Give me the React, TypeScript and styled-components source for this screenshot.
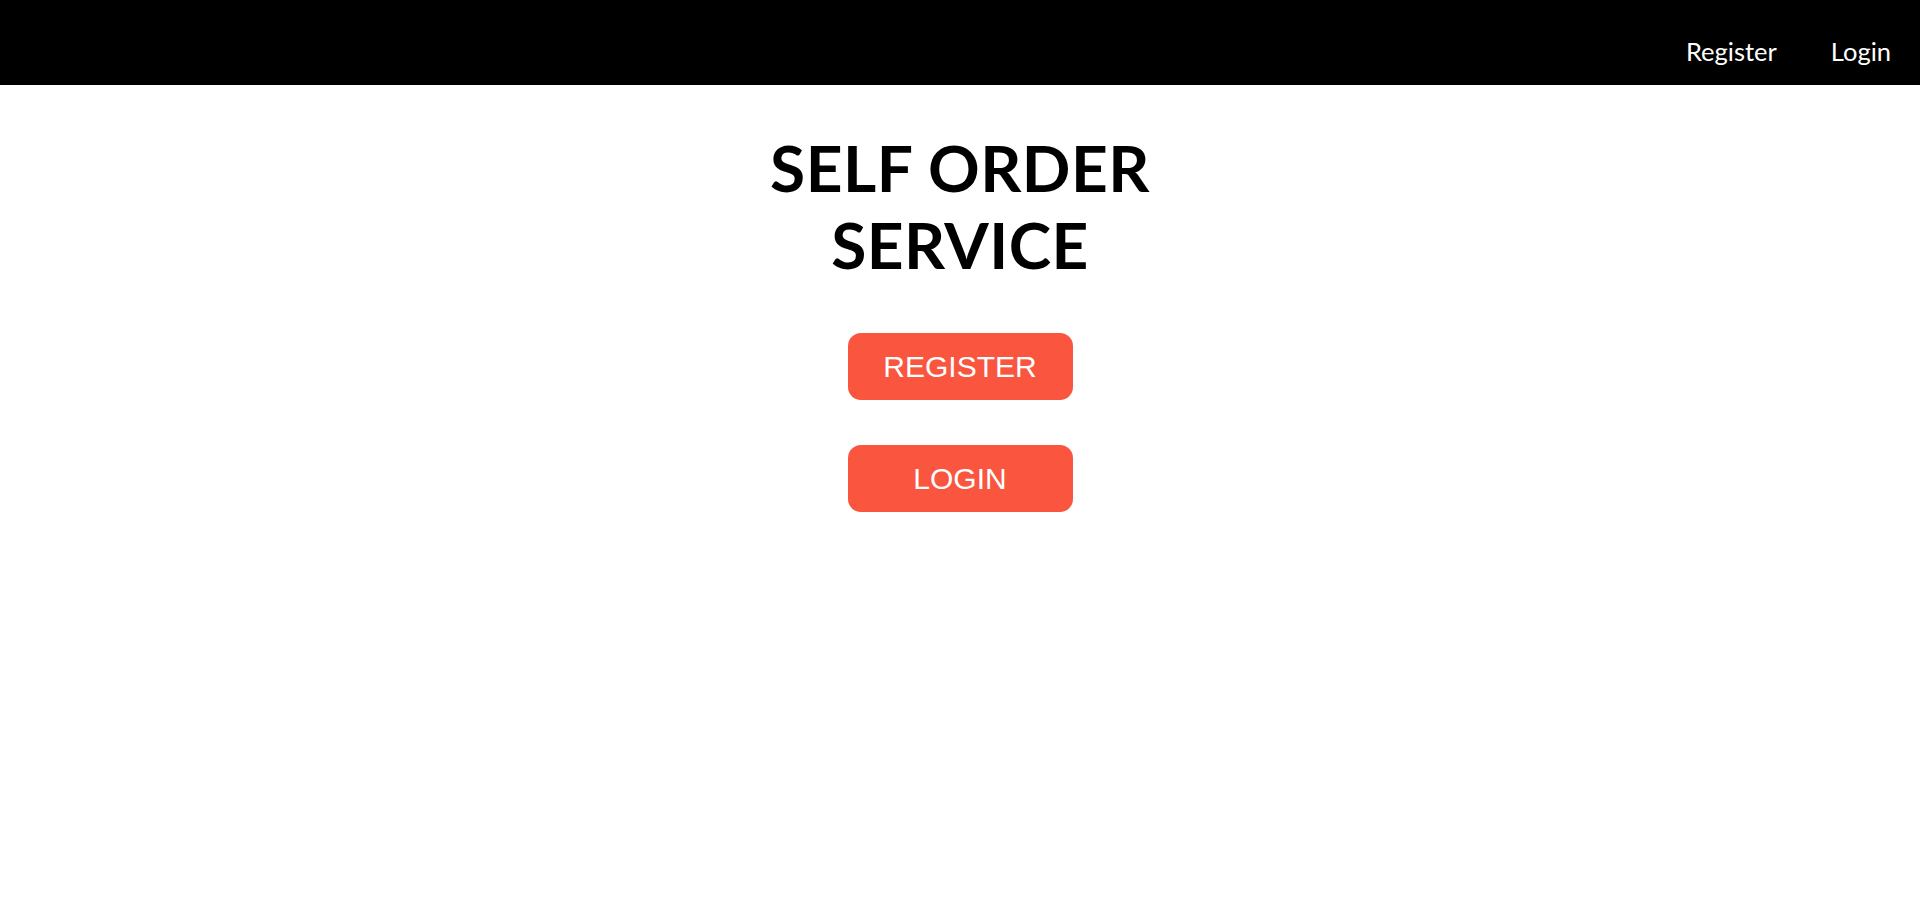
import styled, { createGlobalStyle } from "styled-components";

const GlobalStyle = createGlobalStyle`
  body {
    margin: 0;
    background: #ffffff;
    font-family: "Lato", "Open Sans", sans-serif;
  }
`;

const Navbar = styled.nav`
  height: 85px;
  background: #000000;
  display: flex;
  align-items: center;
  justify-content: flex-end;
  padding: 0 29px 0 0;
  gap: 54px;
`;

const NavLink = styled.a`
  color: #ffffff;
  font-family: "Lato", sans-serif;
  font-size: 25.5px;
  text-decoration: none;
  cursor: pointer;
  margin-top: 16px;
`;

const Main = styled.main`
  display: flex;
  flex-direction: column;
  align-items: center;
`;

const Title = styled.h1`
  margin: 44px 0 0;
  font-family: "Lato", sans-serif;
  font-weight: 700;
  font-size: 64px;
  line-height: 77px;
  letter-spacing: 0.5px;
  text-align: center;
  color: #000000;
`;

const Actions = styled.div`
  margin-top: 50px;
  display: flex;
  flex-direction: column;
  align-items: center;
  gap: 45px;
`;

const ActionButton = styled.button`
  width: 225px;
  height: 67px;
  border: none;
  border-radius: 13px;
  background: #f9553f;
  color: #ffffff;
  font-family: "Liberation Sans", Arial, sans-serif;
  font-size: 30px;
  cursor: pointer;
`;

export default function App() {
  return (
    <>
      <GlobalStyle />
      <Navbar>
        <NavLink>Register</NavLink>
        <NavLink>Login</NavLink>
      </Navbar>
      <Main>
        <Title>
          SELF ORDER
          <br />
          SERVICE
        </Title>
        <Actions>
          <ActionButton>REGISTER</ActionButton>
          <ActionButton>LOGIN</ActionButton>
        </Actions>
      </Main>
    </>
  );
}
